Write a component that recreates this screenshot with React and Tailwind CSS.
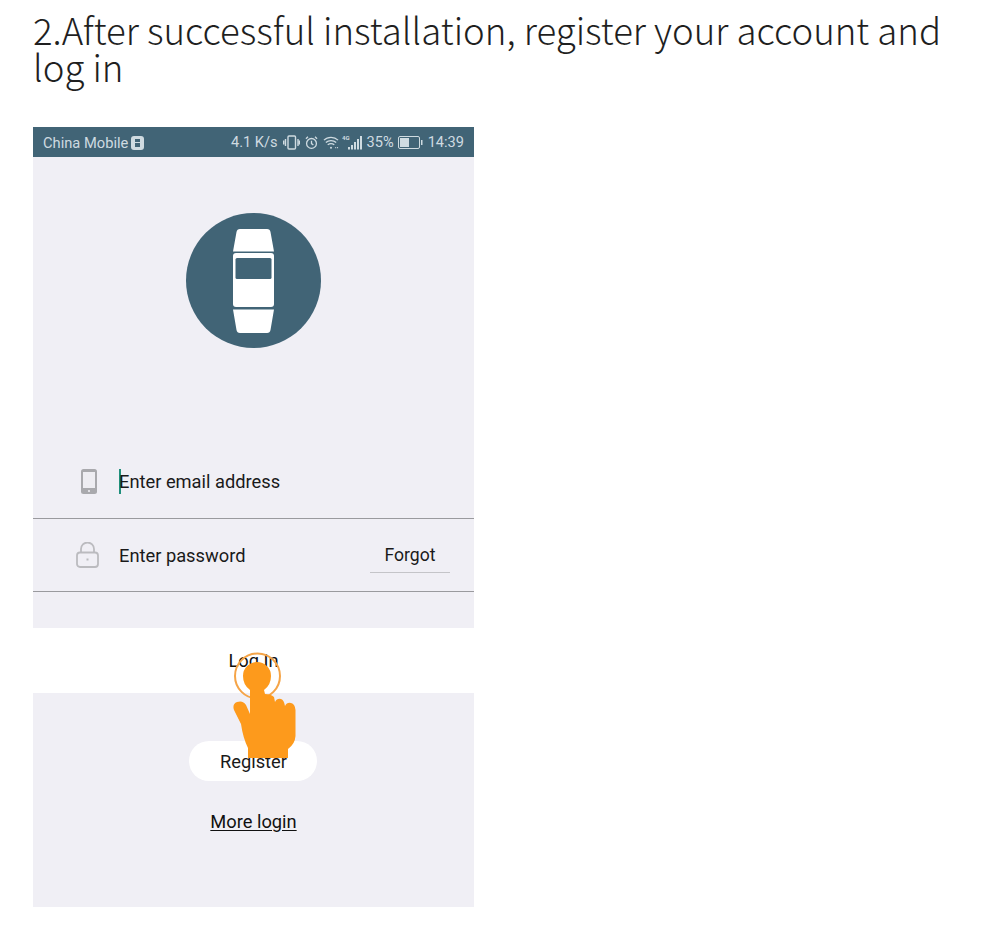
import React from "react";

const sans = "font-['Roboto',sans-serif]";

function StatusIcons() {
  return (
    <div className="flex items-center text-[14.6px] text-[#cfdbe1]">
      <span>4.1 K/s</span>
      <svg className="ml-[5px]" width="17" height="15" viewBox="0 0 17 15" fill="none" stroke="#cfdbe1" strokeWidth="1.400">
        <rect x="5" y="1" width="7.500" height="13" rx="1" />
        <path d="M2.500 4v7M15 4v7M0.700 5.500v4M16.500 5.500v4" />
      </svg>
      <svg className="ml-[5px]" width="13" height="15" viewBox="0 0 14 15" fill="none" stroke="#cfdbe1" strokeWidth="1.400">
        <circle cx="7" cy="8.500" r="5.300" />
        <path d="M7 5.500v3.200l2 1.500M1 3.500l2.200-2.200M13 3.500l-2.200-2.200" />
      </svg>
      <svg className="ml-[5px]" width="16" height="15" viewBox="0 0 17 15" fill="none" stroke="#cfdbe1" strokeWidth="1.300">
        <path d="M1 5c4-4 11-4 15 0M3 7.500c3-2.800 8-2.800 11 0M5 10c2-1.500 5-1.500 7 0" />
        <circle cx="8.500" cy="13" r="1.100" fill="#cfdbe1" stroke="none" />
        <path d="M13 13h1M15 13h1" />
      </svg>
      <svg className="ml-[3px]" width="22" height="16" viewBox="0 0 22 16" fill="#cfdbe1">
        <text x="0" y="5" fontSize="6" fontWeight="700" fontFamily="Roboto">4G</text>
        <rect x="6" y="12" width="2" height="2.500" />
        <rect x="9" y="10" width="2" height="4.500" />
        <rect x="12" y="7" width="2" height="7.500" />
        <rect x="15" y="4" width="2" height="10.500" />
        <rect x="18" y="1" width="2" height="13.500" />
      </svg>
      <span className="ml-[3px]">35%</span>
      <svg className="ml-[4px]" width="25" height="13" viewBox="0 0 25 13" fill="none">
        <rect x="0.500" y="0.500" width="21" height="12" rx="1.500" stroke="#cfdbe1" />
        <rect x="2" y="2" width="9" height="9" fill="#cfdbe1" />
        <rect x="23" y="4" width="1.500" height="5" fill="#cfdbe1" />
      </svg>
      <span className="ml-[5px]">14:39</span>
    </div>
  );
}

function Band() {
  return (
    <svg width="135" height="135" viewBox="0 0 135 135" className="rounded-full bg-[#416476]">
      <path d="M50.500 19Q51 16 54 16H81Q84 16 84.500 19L88 38.500H47Z" fill="#fff" />
      <path d="M47 43Q47 40 50 40H85Q88 40 88 43V91Q88 94 85 94H50Q47 94 47 91Z" fill="#fff" />
      <rect x="49.500" y="45" width="36" height="21" rx="1.500" fill="#416476" />
      <path d="M47 96.500H88L84.500 117Q84 120 81 120H54Q51 120 50.500 117Z" fill="#fff" />
    </svg>
  );
}

function PhoneIcon() {
  return (
    <svg width="16" height="25" viewBox="0 0 16 25">
      <rect x="0" y="0" width="16" height="25" rx="2.500" fill="#a9a9ad" />
      <rect x="2" y="3" width="12" height="16" fill="#eeedf2" />
      <circle cx="8" cy="22" r="1.100" fill="#eeedf2" />
    </svg>
  );
}

function LockIcon() {
  return (
    <svg width="23" height="26" viewBox="0 0 23 26" fill="none" stroke="#bbbbbf" strokeWidth="1.800">
      <rect x="1" y="10.500" width="21" height="14.500" rx="3" />
      <path d="M5 10.500V7a6.500 6.500 0 0 1 13 0v3.500" />
      <path d="M11.500 16.500v2" strokeWidth="2" />
    </svg>
  );
}

function Hand() {
  return (
    <svg className="absolute left-[200px] top-[525px]" width="65" height="108" viewBox="0 0 65 108" fill="none">
      <circle cx="24.500" cy="24" r="22.500" stroke="#f5a447" strokeWidth="2" />
      <path
        fill="#fd9a1c"
        d="M10 24a14 14 0 0 1 28 0Q38 33 31 38L32 42Q38 42 41 45L42 50Q44 46 48 47Q51 48 52 54Q54 50 58 51Q62 52 62.500 58V84Q62 92 55 97V106H15V96Q10 86 8 72L1 58Q-1 52 4 50Q10 48 13 53L17 62V38Q10 33 10 24Z"
      />
    </svg>
  );
}

export default function App() {
  return (
    <div className="min-h-[935px] bg-white pl-[33px] pt-[11px]">
      <h1 className="w-[930px] font-['Noto_Sans_CJK_SC','Noto_Sans',sans-serif] text-[36.6px] leading-[37px] font-light text-[#1f1f1f]">
        2.After successful installation, register your account and log in
      </h1>

      <div className={`relative mt-[42px] flex h-[780px] w-[441px] flex-col bg-[#f0eff5] ${sans}`}>
        <div className="flex h-[30px] items-center justify-between bg-[#416476] pl-[10px] pr-[10px] pt-[2px]">
          <div className="flex items-center text-[14.7px] text-[#cfdbe1]">
            China Mobile
            <span className="ml-[3px] flex h-[14px] w-[13px] flex-col items-center justify-center gap-[1px] rounded-[3px] bg-[#cfdbe1]">
              <span className="h-[3px] w-[5px] bg-[#416476]" />
              <span className="h-[4px] w-[5px] bg-[#416476]" />
            </span>
          </div>
          <StatusIcons />
        </div>

        <div className="flex justify-center pt-[56px]">
          <Band />
        </div>

        <div className="mt-[97px] flex h-[74px] items-center border-b border-[#9a9a9e] pl-[48px]">
          <PhoneIcon />
          <span className="ml-[22px] h-[25px] w-[2px] bg-[#1f8f7c]" />
          <span className="ml-[-2px] text-[18.3px] text-[#1a1a1a]">Enter email address</span>
        </div>

        <div className="flex h-[73px] items-center border-b border-[#9a9a9e] pl-[43px] pr-[24px]">
          <LockIcon />
          <span className="ml-[20px] mt-[1px] text-[18.3px] text-[#1a1a1a]">Enter password</span>
          <span className="ml-auto mt-[5px] w-[80px] border-b border-[#c4c4c8] pb-[4px] text-center text-[17.6px] text-[#1a1a1a]">
            Forgot
          </span>
        </div>

        <div className="mt-[36px] flex h-[65px] items-center justify-center bg-white text-[18.3px] text-[#111]">
          Log In
        </div>

        <div className="mt-[48px] mr-[2px] flex h-[40px] w-[128px] items-center justify-center self-center rounded-full bg-white pl-[2px] pt-[2px] text-[18.3px] text-[#1a1a1a]">
          Register
        </div>

        <div className="mt-[29px] self-center text-[18.3px] leading-[24px] text-[#111] underline underline-offset-2">
          More login
        </div>

        <Hand />
      </div>
    </div>
  );
}
